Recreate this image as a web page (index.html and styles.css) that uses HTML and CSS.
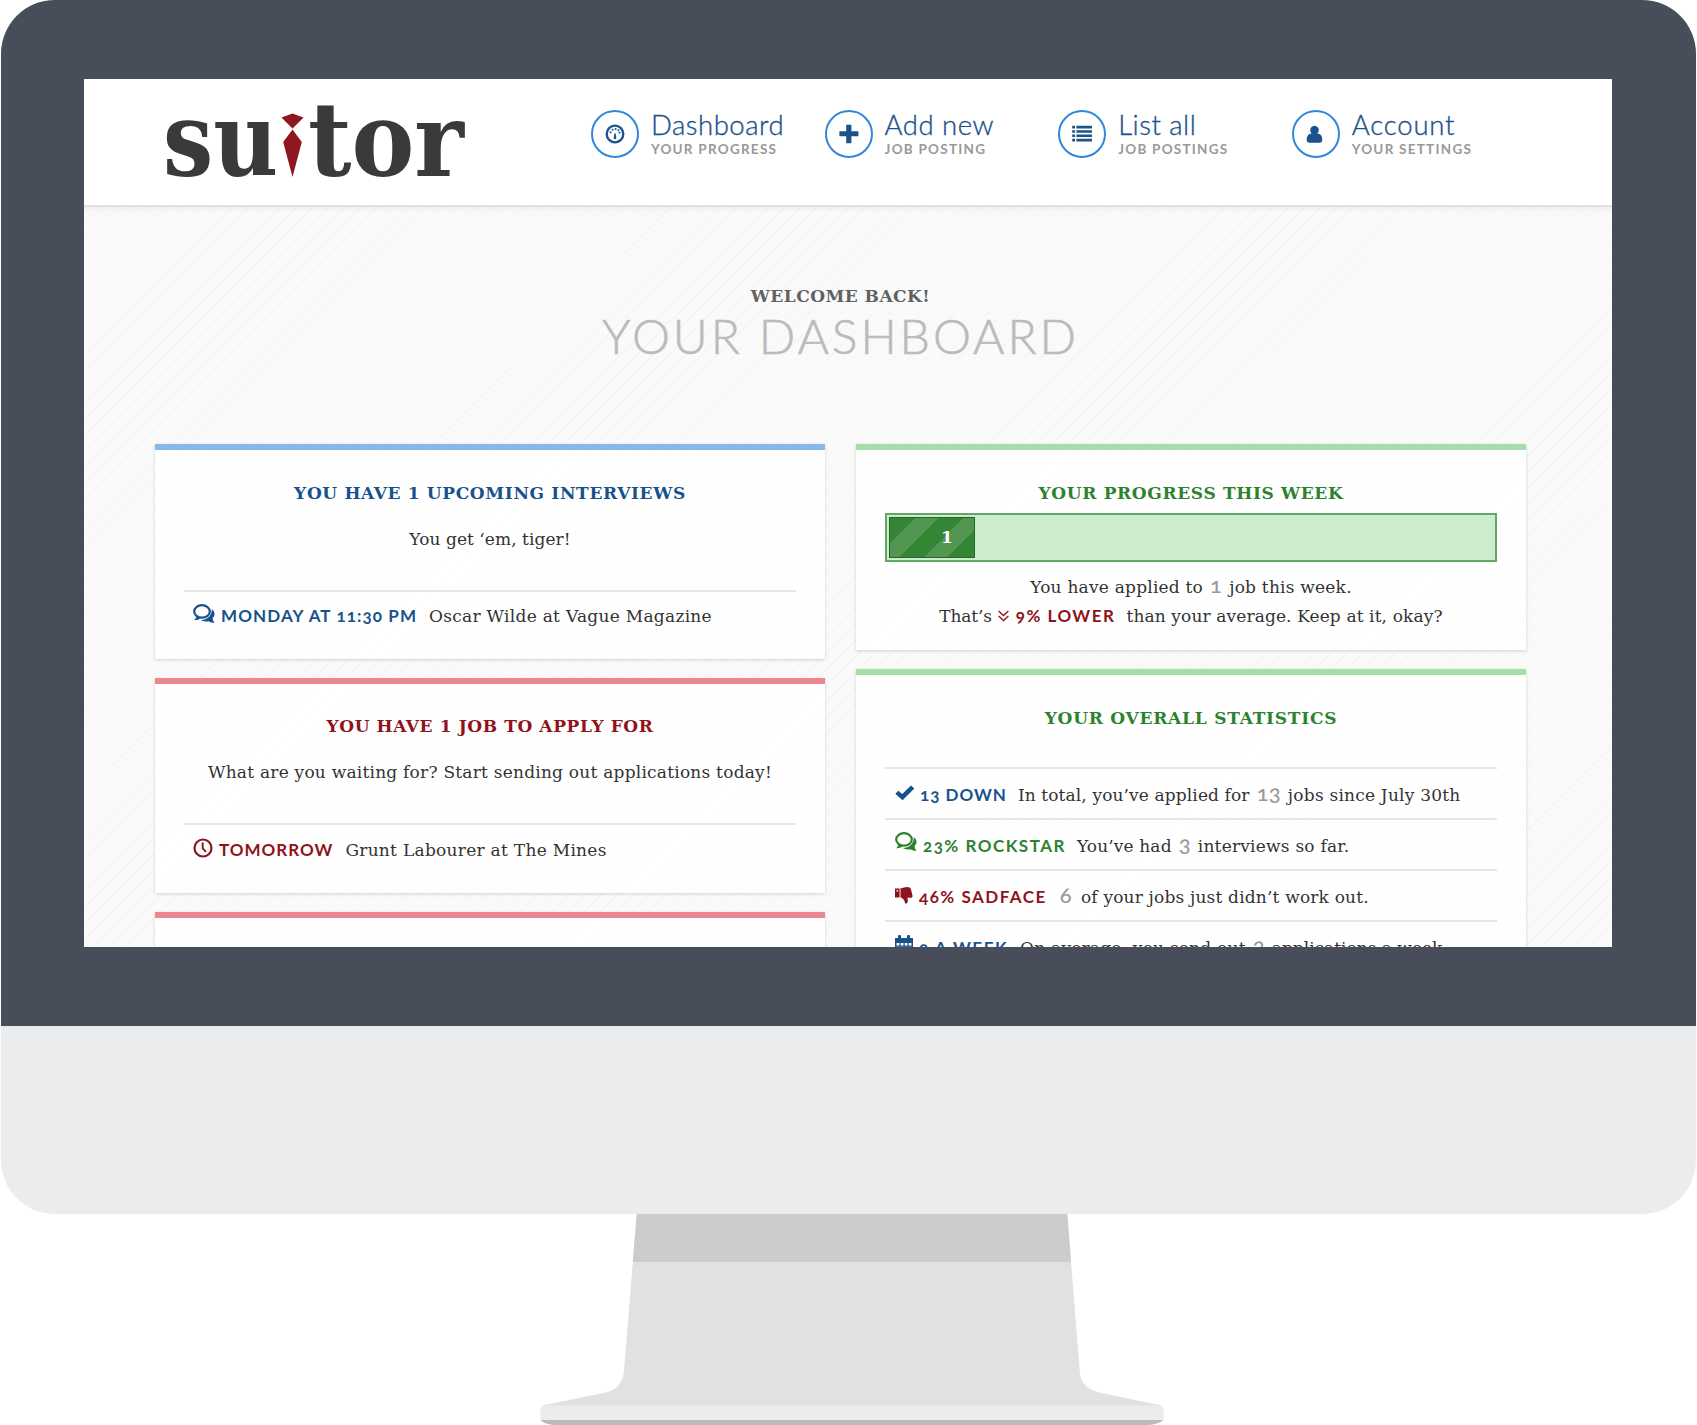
FILE: index.html
```html
<!DOCTYPE html>
<html lang="en">
<head>
<meta charset="utf-8">
<title>Suitor – Dashboard</title>
<link rel="stylesheet" href="styles.css">
</head>
<body>
<svg class="defs" aria-hidden="true">
  <symbol id="chat" viewBox="0 0 22 20"><ellipse cx="9" cy="7.4" rx="7.8" ry="6.2" fill="none" stroke="currentColor" stroke-width="2.2"/><path fill="currentColor" d="M3.6 11.5C3.4 13.5 2.6 14.8 1.2 16.2c2.6.1 4.8-.5 6.500-1.900zM18.800 5.200c3.400 2.600 3.600 6.400.8 8.900.1 1.800.8 3.300 2 4.900-2.300 0-4.300-.6-6-1.700-3.200.5-6 .1-8-1.200 6.500.2 11.400-4.200 11.200-10.900z"/></symbol>
</svg>
<div class="monitor">
  <div class="bezel">
    <div class="screen">
      <header class="header">
        <svg class="logo" viewBox="0 0 310 90" role="img" aria-label="suitor">
          <text x="-1" y="78" textLength="115" lengthAdjust="spacingAndGlyphs">su</text>
          <path d="M117.500 19.500l11-4 11 4-11 11z M128.500 31.500l9.300 12.500L128.500 79l-9.300-35z"/>
          <text x="144" y="78" textLength="156" lengthAdjust="spacingAndGlyphs">tor</text>
        </svg>
        <nav class="nav">
          <a class="nav-item"><span class="ring"><svg viewBox="0 0 20 20"><circle cx="10" cy="10" r="8.300" fill="none" stroke="currentColor" stroke-width="2.300"/><path fill="currentColor" d="M9.300 9.500h1.400l.6 4.500a1.300 1.300 0 0 1-2.600 0z"/><g fill="currentColor"><circle cx="5.600" cy="8.200" r="1"/><circle cx="7.600" cy="5.700" r="1"/><circle cx="10.600" cy="5" r="1"/><circle cx="13.400" cy="6.200" r="1"/><circle cx="14.500" cy="8.700" r="1"/></g></svg></span>
            <span class="nav-text"><b class="nav-title">Dashboard</b><span class="nav-sub">YOUR PROGRESS</span></span></a>
          <a class="nav-item"><span class="ring"><svg viewBox="0 0 20 20"><path fill="currentColor" d="M7.200.8h5.200v6.400h7v5h-7v7H7.200v-7H.4v-5h6.800z"/></svg></span>
            <span class="nav-text"><b class="nav-title">Add new</b><span class="nav-sub">JOB POSTING</span></span></a>
          <a class="nav-item"><span class="ring"><svg viewBox="0 0 20 20"><path fill="currentColor" d="M.2 1.800h2.800v2.700H.2zM4.400 1.800H20v2.700H4.400zM.2 6.200h2.800v2.600H.2zM4.400 6.200H20v2.600H4.400zM.2 10.500h2.800v2.600H.2zM4.400 10.500H20v2.600H4.400zM.2 14.800h2.800v2.600H.2zM4.400 14.800H20v2.600H4.400z"/></svg></span>
            <span class="nav-text"><b class="nav-title">List all</b><span class="nav-sub">JOB POSTINGS</span></span></a>
          <a class="nav-item account"><span class="ring"><svg viewBox="0 0 20 20"><path fill="currentColor" d="M8.500 1.800a4.400 4.400 0 0 1 3 7.600c2.900.2 4.800 2.600 4.800 6.300 0 1.800-1.100 3-2.700 3H3.400c-1.600 0-2.700-1.200-2.700-3 0-3.700 1.900-6.100 4.800-6.300a4.400 4.400 0 0 1 3-7.600z"/></svg></span>
            <span class="nav-text"><b class="nav-title">Account</b><span class="nav-sub">YOUR SETTINGS</span></span></a>
        </nav>
      </header>
      <main class="main">
        <div class="welcome">WELCOME BACK!</div>
        <h1 class="heading">YOUR DASHBOARD</h1>
        <div class="columns">
          <div class="column">
            <section class="card blue interviews">
              <h2>YOU HAVE 1 UPCOMING INTERVIEWS</h2>
              <p class="lead">You get ‘em, tiger!</p>
              <div class="row only"><svg class="ico chat"><use href="#chat"/></svg><b class="tag blue-t">MONDAY AT 11:30 PM</b><span class="txt">Oscar Wilde at Vague Magazine</span></div>
            </section>
            <section class="card red jobs">
              <h2>YOU HAVE 1 JOB TO APPLY FOR</h2>
              <p class="lead">What are you waiting for? Start sending out applications today!</p>
              <div class="row only"><svg class="ico clock" viewBox="0 0 20 20"><circle cx="10" cy="10" r="8.500" fill="none" stroke="currentColor" stroke-width="2.200"/><path fill="none" stroke="currentColor" stroke-width="1.900" d="M9.700 4.500v5.800l3.300 3.600"/></svg><b class="tag red-t">TOMORROW</b><span class="txt">Grunt Labourer at The Mines</span></div>
            </section>
            <section class="card red"></section>
          </div>
          <div class="column">
            <section class="card green progress">
              <h2>YOUR PROGRESS THIS WEEK</h2>
              <div class="bar"><div class="fill">1</div></div>
              <p class="line applied"><span>You have applied to</span><span class="num">1</span><span>job this week.</span></p>
              <p class="line average"><span class="thats">That’s</span><svg class="down" viewBox="0 0 11 12"><path fill="none" stroke="currentColor" stroke-width="1.300" d="M.6 1l4.900 4.500L10.400 1M.6 6l4.900 4.500L10.400 6"/></svg><b class="tag red-t">9% LOWER</b><span class="txt">than your average. Keep at it, okay?</span></p>
            </section>
            <section class="card green stats">
              <h2>YOUR OVERALL STATISTICS</h2>
              <div class="row total"><svg class="ico check" viewBox="0 0 20 16"><path fill="currentColor" d="M.3 8.800l3-3.100L7.200 9 16 .5l3.400 3.100L7.500 15.200z"/></svg><b class="tag blue-t">13 DOWN</b><span class="txt">In total, you’ve applied for</span><span class="num">13</span><span class="end">jobs since July 30th</span></div>
              <div class="row rockstar"><svg class="ico chat green-t"><use href="#chat"/></svg><b class="tag green-t">23% ROCKSTAR</b><span class="txt">You’ve had</span><span class="num">3</span><span class="end">interviews so far.</span></div>
              <div class="row sadface"><svg class="ico thumb" viewBox="0 0 18 17"><path fill="currentColor" fill-rule="evenodd" d="M0 1.500h4.600v9H0zM1.600 3v1.500h1.500V3zM5.500 1.300C8 .8 10 0 12.200 0c2.600 0 3.400 1 3.800 2.600l1.500 5.800c.2 1.500-.4 2.300-1.800 2.300h-3.400c.9 2.300.8 5.900-1.300 5.900-1.400 0-1.100-1.800-1.800-3.200-.6-1.400-2.600-2.900-3.700-3z"/></svg><b class="tag red-t">46% SADFACE</b><span class="num">6</span><span class="end">of your jobs just didn’t work out.</span></div>
              <div class="row weekly"><svg class="ico cal" viewBox="0 0 18 19"><path fill="currentColor" fill-rule="evenodd" d="M0 3h3V1.300a1.500 1.500 0 0 1 3 0V3h6V1.300a1.500 1.500 0 0 1 3 0V3h3v16H0zM1.500 8v2.600h3V8zM5.700 8v2.600h2.800V8zM9.700 8v2.600h2.800V8zM13.700 8v2.600h2.800V8zM1.500 11.800v2.500h3v-2.500zM5.700 11.800v2.500h2.800v-2.500zM9.700 11.800v2.500h2.800v-2.500zM13.700 11.800v2.500h2.800v-2.500z"/></svg><b class="tag blue-t">3 A WEEK</b><span class="txt">On average, you send out</span><span class="num">3</span><span class="end">applications a week.</span></div>
            </section>
          </div>
        </div>
      </main>
    </div>
  </div>
  <div class="chin"></div>
  <svg class="stand" viewBox="0 0 625 211">
    <path fill="#e0e1e3" d="M96.800 0H527.200L539.500 154C539.500 168 547 176 559.500 178.500L623.500 192H.500L65.500 178.500C77.500 176 84 167 84.200 154z"/>
    <path fill="#cbccce" d="M96.800 0H527.200L531 48H92.800z"/>
    <path fill="#b9babb" d="M.500 205H623.500C622 209 612 211 606 211H18C10 211 1 209 .500 205z"/>
    <path fill="#ebeced" d="M5 191.500H619Q623.500 192.500 623.500 196V206H.500V196Q.500 192.500 5 191.500z"/>
  </svg>
</div>
</body>
</html>
```
FILE: styles.css
```css
* { box-sizing: border-box; }
body { margin: 0; background: #fff; font-family: "DejaVu Serif", serif; color: #333; }
.defs { position: absolute; width: 0; height: 0; }

/* Monitor */
.monitor { width: 1697px; height: 1425px; padding: 0 1px; overflow: hidden; }
.bezel { height: 1026px; padding: 79px 84px 79px 83px; background: #474e59; border-radius: 54px 54px 0 0; }
.chin { height: 188px; background: #ebeced; border-radius: 0 0 54px 54px; }
.stand { display: block; width: 625px; height: 211px; margin-left: 539px; }
.screen {
  height: 868px; overflow: hidden;
  background: repeating-linear-gradient(135deg, #fafafa 0 10.100px, #f2f2f2 10.800px 11.100px, #fafafa 11.500px);
}

/* Header */
.header {
  position: relative; display: flex; height: 128px; padding: 15px 0 0 80px;
  background: #fff; border-bottom: 2px solid #e0e0e0; box-shadow: 0 2px 5px rgba(0, 0, 0, .06);
}
.logo { flex: none; width: 310px; height: 90px; margin-top: 4px; overflow: visible; fill: #3a3a3a; font: bold 102px "DejaVu Serif", serif; }
.logo path { fill: #8e1722; }
.nav { display: flex; margin: 16px 0 0 117px; }
.nav-item { display: flex; width: 233.600px; height: 49px; gap: 12px; color: #1a528c; }
.ring { display: flex; flex: none; width: 48px; height: 48px; align-items: center; justify-content: center; border: 2px solid #3187dc; border-radius: 50%; }
.ring svg { width: 20px; height: 20px; }
.nav-text { display: flex; flex-direction: column; white-space: nowrap; font-family: Lato, sans-serif; }
.nav-title { font-weight: 300; font-size: 27.500px; line-height: 30px; letter-spacing: .5px; -webkit-text-stroke: .35px; }
.account .nav-title { letter-spacing: .8px; }
.nav-sub { margin-top: 1px; font-weight: 700; font-size: 13.500px; line-height: 16px; letter-spacing: 1.250px; color: #999; }

/* Page title */
.main { padding: 77px 86px 0 71px; }
.welcome { text-align: center; font-weight: 700; font-size: 17px; line-height: 24px; letter-spacing: .470px; color: #616161; text-shadow: 0 1px 0 #fff; }
.heading { margin: 0; text-align: center; font: 300 48px/56px Lato, sans-serif; letter-spacing: 2.940px; color: #bbb; white-space: nowrap; -webkit-text-stroke: .6px; }

/* Cards */
.columns { display: grid; grid-template-columns: 670px 670px; column-gap: 31px; margin-top: 80px; }
.column { display: flex; flex-direction: column; gap: 19px; }
.card { height: 215px; padding: 31px 29px 0; border-top: 6px solid; background: rgba(255, 255, 255, .86); box-shadow: 0 1px 3px rgba(0, 0, 0, .17); white-space: nowrap; }
.card h2 { margin: 0; text-align: center; font-size: 17px; line-height: 24px; letter-spacing: .650px; }
.blue { border-color: #87b9e8; }
.blue h2, .blue-t { color: #17528d; }
.red { border-color: #eb888f; }
.red h2, .red-t { color: #8f131c; }
.green { border-color: #a7dda8; }
.green h2, .green-t { color: #2d822e; }
.lead { margin: 22px 0 0; text-align: center; font-size: 17px; line-height: 24px; letter-spacing: .065px; }
.row { display: flex; height: 51px; padding: 12px 0 0 10px; align-items: baseline; border-top: 2px solid #e6e6e6; font-size: 17px; line-height: 24px; letter-spacing: .220px; }
.row.only { margin-top: 39px; }
.tag { font: 700 17px/24px Lato, sans-serif; font-variant-numeric: oldstyle-nums; letter-spacing: 1.500px; }
.txt { margin-left: 11px; }
.num { margin: 0 7px; font: 500 22px/24px Lato, sans-serif; font-variant-numeric: oldstyle-nums; color: #999; }
.ico { flex: none; align-self: flex-start; margin-right: 6px; color: #17528d; }
.only .ico { margin: 0 6px 0 -1px; }
.only .txt { margin-left: 12px; letter-spacing: .280px; }
.chat { width: 22px; height: 20px; }
.clock { width: 20px; height: 20px; color: #8f131c; }
.check { width: 20px; height: 16px; margin: 4px 5px 0 0; }
.thumb { width: 18px; height: 17px; margin-top: 4px; color: #8f131c; }
.cal { width: 18px; height: 19px; margin-top: 1px; }
.ico.green-t { color: #2d822e; }

.interviews .tag { letter-spacing: 1.110px; }
.jobs { padding-top: 30px; }
.jobs h2 { letter-spacing: .600px; }
.jobs .lead { letter-spacing: .227px; }
.jobs .row { padding-top: 13px; }
.jobs .tag { letter-spacing: 1px; }

/* Weekly progress */
.progress { height: 206px; }
.bar { height: 49px; margin-top: 8px; padding: 2px; background: #cdebcd; border: 2px solid #62a764; }
.fill { width: 86px; height: 41px; padding-left: 51px; border: 1px solid #23662a; background: repeating-linear-gradient(135deg, #348534 0 17.700px, #529652 17.700px 34px); color: #fff; font-weight: 700; font-size: 17px; line-height: 38px; }
.line { display: flex; height: 27px; justify-content: center; align-items: baseline; margin: 0; font-size: 17px; line-height: 29px; }
.applied { margin-top: 11px; height: 29px; letter-spacing: .220px; }
.average .txt { letter-spacing: .120px; }
.thats { letter-spacing: -.160px; }
.down { width: 11px; height: 12px; margin: 0 7px 1px 6px; color: #8f131c; }

/* Overall statistics */
.stats { height: 400px; }
.stats h2 { letter-spacing: .760px; }
.total { margin-top: 37px; }
.total .tag { letter-spacing: 1px; }
.total .txt { letter-spacing: .120px; }
.rockstar .txt { letter-spacing: .140px; }
.sadface .num { margin: 0 9px 0 13px; }
.sadface .end { letter-spacing: .180px; }
.weekly .txt { margin-left: 12px; }
.weekly .end { letter-spacing: 0; }
```
